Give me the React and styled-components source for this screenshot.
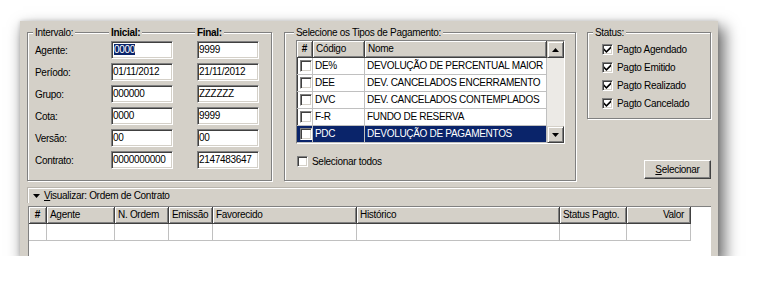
import React from "react";
import styled, { createGlobalStyle } from "styled-components";

// # Style # //
const GlobalStyle = createGlobalStyle`
  body {
    margin: 0;
    background: #fff;
  }
  #root {
    padding: 21px 0 0 20px;
  }
`;

const Window = styled.div`
  width: 698px;
  height: 235px;
  box-sizing: border-box;
  padding: 11px 7px 0 7px;
  background: #d4d0c8;
  box-shadow: 0 0 4px rgba(0, 0, 0, 0.15), 5px 8px 14px 2px rgba(0, 0, 0, 0.55);
  font-family: "Liberation Sans", Arial, sans-serif;
  font-size: 10px;
  letter-spacing: -0.3px;
  color: #000;
  display: flex;
  flex-direction: column;
  overflow: hidden;
`;

const TopArea = styled.div`
  display: flex;
  height: 149px;
`;

const GroupBox = styled.div`
  width: ${p => p.$w}px;
  height: ${p => p.$h}px;
  margin-right: ${p => p.$mr || 0}px;
  box-sizing: border-box;
  padding: 0 ${p => p.$px}px;
  border: 1px solid #808080;
  box-shadow: inset 1px 1px 0 #fff, 1px 1px 0 #fff;
`;

const Legend = styled.div`
  display: ${p => (p.$grid ? "grid" : "flex")};
  grid-template-columns: 76px 86px 62px;
  height: 13px;
  line-height: 13px;
  margin-top: -7px;
`;

const Caption = styled.span`
  justify-self: start;
  background: #d4d0c8;
  padding: 0 2px;
  margin-left: -2px;
  font-weight: ${p => (p.$bold ? 700 : 400)};
`;

const IntervalGrid = styled.div`
  display: grid;
  grid-template-columns: 76px 86px 62px;
  grid-auto-rows: 18px;
  row-gap: 4px;
  margin-top: 2px;
  align-items: center;
`;

const TextBox = styled.div`
  width: 62px;
  height: 18px;
  box-sizing: border-box;
  padding-left: 1px;
  background: #fff;
  border: 1px solid;
  border-color: #808080 #fff #fff #808080;
  box-shadow: inset 1px 1px 0 #404040, inset -1px -1px 0 #d4d0c8;
  line-height: 16px;
  white-space: nowrap;
  overflow: hidden;
`;

const Highlight = styled.span`
  background: #0a246a;
  color: #fff;
  margin-left: 1px;
`;

const PayTable = styled.div`
  width: 269px;
  height: 104px;
  margin-top: 1px;
  box-sizing: border-box;
  border: 1px solid;
  border-color: #808080 #fff #fff #808080;
  background: #fff;
  display: flex;
  overflow: hidden;
`;

const TableBody = styled.div`
  flex: 1;
  box-shadow: inset 1px 1px 0 #404040;
`;

const Row = styled.div`
  display: grid;
  grid-template-columns: ${p => p.$cols};
  height: 17px;
  background: ${p => (p.$selected ? "#0a246a" : "transparent")};
  color: ${p => (p.$selected ? "#fff" : "#000")};
`;

const HeadCell = styled.div`
  box-sizing: border-box;
  background: #d4d0c8;
  border-right: 1px solid #404040;
  border-bottom: 1px solid #404040;
  box-shadow: inset 1px 1px 0 #fff, inset -1px -1px 0 #808080;
  padding: 0 ${p => (p.$right ? 6 : 3)}px 0 3px;
  line-height: 16px;
  text-align: ${p => p.$align || "left"};
  font-weight: ${p => (p.$bold ? 700 : 400)};
  white-space: nowrap;
  overflow: hidden;
`;

const Cell = styled.div`
  box-sizing: border-box;
  border-right: 1px solid #c0c0c0;
  border-bottom: 1px solid #c0c0c0;
  padding-left: 2px;
  line-height: 16px;
  white-space: nowrap;
  overflow: hidden;
  display: flex;
  align-items: center;
  justify-content: ${p => (p.$center ? "center" : "flex-start")};
`;

const ScrollBar = styled.div`
  width: 17px;
  display: flex;
  flex-direction: column;
  background: #eceae6;
`;

const ScrollTrack = styled.div`
  flex: 1;
`;

const ScrollButton = styled.div`
  height: 17px;
  box-sizing: border-box;
  background: #d4d0c8;
  border: 1px solid;
  border-color: #d4d0c8 #404040 #404040 #d4d0c8;
  box-shadow: inset 1px 1px 0 #fff, inset -1px -1px 0 #808080;
  display: flex;
  align-items: center;
  justify-content: center;
`;

const Check = styled.span`
  display: inline-flex;
  align-items: center;
  justify-content: center;
  flex: none;
  width: ${p => p.$size}px;
  height: ${p => p.$size}px;
  box-sizing: border-box;
  background: #fff;
  border: 1px solid;
  border-color: #808080 #fff #fff #808080;
  box-shadow: inset 1px 1px 0 #404040, inset -1px -1px 0 #d4d0c8;
`;

const CheckRow = styled.div`
  display: flex;
  align-items: center;
  gap: 4px;
  height: ${p => p.$h}px;
  margin-top: ${p => p.$mt || 0}px;
  padding-left: ${p => p.$pl || 0}px;
`;

const StatusColumn = styled.div`
  width: 124px;
  display: flex;
  flex-direction: column;
  align-items: flex-end;
`;

const StatusList = styled.div`
  padding-left: 7px;
  margin-top: 1px;
`;

const Button = styled.div`
  margin-top: auto;
  margin-bottom: 2px;
  width: 67px;
  height: 19px;
  box-sizing: border-box;
  background: #d4d0c8;
  border: 1px solid;
  border-color: #fff #404040 #404040 #fff;
  box-shadow: inset -1px -1px 0 #808080;
  display: flex;
  align-items: center;
  justify-content: center;
`;

const ViewBar = styled.div`
  margin-top: 6px;
  height: 16px;
  box-sizing: border-box;
  border-top: 1px solid #b8b4ac;
  border-left: 1px solid #b8b4ac;
  box-shadow: inset 1px 1px 0 #fff;
  display: flex;
  align-items: center;
  gap: 4px;
  padding-left: 5px;
`;

const OrderGrid = styled.div`
  flex: 1;
  margin: 3px 0 0 1px;
  background: #fff;
  border-top: 1px solid #808080;
  border-left: 1px solid #808080;
`;
// # End Style # //

const CheckMark = () => (
  <svg width="7" height="7" viewBox="0 0 7 7">
    <path d="M0 2.3 L2.4 4.7 L7 0.1 L7 2.4 L2.4 7 L0 4.6 Z" fill="#000" />
  </svg>
);

const Arrow = ({ up }) => (
  <svg width="7" height="4" viewBox="0 0 7 4">
    <path d={up ? "M3.5 0 L7 4 L0 4 Z" : "M0 0 L7 0 L3.5 4 Z"} fill="#000" />
  </svg>
);

const intervals = [
  ["Agente:", "0000", "9999"],
  ["Período:", "01/11/2012", "21/11/2012"],
  ["Grupo:", "000000", "ZZZZZZ"],
  ["Cota:", "0000", "9999"],
  ["Versão:", "00", "00"],
  ["Contrato:", "0000000000", "2147483647"],
];

const tipos = [
  ["DE%", "DEVOLUÇÃO DE PERCENTUAL MAIOR"],
  ["DEE", "DEV. CANCELADOS ENCERRAMENTO"],
  ["DVC", "DEV. CANCELADOS CONTEMPLADOS"],
  ["F-R", "FUNDO DE RESERVA"],
  ["PDC", "DEVOLUÇÃO DE PAGAMENTOS"],
];

const status = ["Pagto Agendado", "Pagto Emitido", "Pagto Realizado", "Pagto Cancelado"];

const payCols = "16px 52px 1fr";
const orderCols = "18px 68px 54px 44px 144px 203px 67px 64px";

const orderHeads = [
  ["#", "center", true],
  ["Agente"],
  ["N. Ordem"],
  ["Emissão"],
  ["Favorecido"],
  ["Histórico"],
  ["Status Pagto."],
  ["Valor", "right"],
];

const App = () => {
  return (
    <>
      <GlobalStyle />
      <Window>
        <TopArea>
          <GroupBox $w={245} $h={149} $px={7} $mr={12}>
            <Legend $grid>
              <Caption>Intervalo:</Caption>
              <Caption $bold>Inicial:</Caption>
              <Caption $bold>Final:</Caption>
            </Legend>
            <IntervalGrid>
              {intervals.map(([label, from, to], i) => (
                <React.Fragment key={label}>
                  <span>{label}</span>
                  <TextBox>{i === 0 ? <Highlight>{from}</Highlight> : from}</TextBox>
                  <TextBox>{to}</TextBox>
                </React.Fragment>
              ))}
            </IntervalGrid>
          </GroupBox>

          <GroupBox $w={292} $h={149} $px={11} $mr={11}>
            <Legend>
              <Caption>Selecione os Tipos de Pagamento:</Caption>
            </Legend>
            <PayTable>
              <TableBody>
                <Row $cols={payCols}>
                  <HeadCell $bold $align="center">#</HeadCell>
                  <HeadCell>Código</HeadCell>
                  <HeadCell>Nome</HeadCell>
                </Row>
                {tipos.map(([code, name], i) => (
                  <Row key={code} $cols={payCols} $selected={i === 4}>
                    <Cell $center>
                      <Check $size={12} />
                    </Cell>
                    <Cell>{code}</Cell>
                    <Cell>{name}</Cell>
                  </Row>
                ))}
              </TableBody>
              <ScrollBar>
                <ScrollButton>
                  <Arrow up />
                </ScrollButton>
                <ScrollTrack />
                <ScrollButton>
                  <Arrow />
                </ScrollButton>
              </ScrollBar>
            </PayTable>
            <CheckRow $h={13} $mt={11} $pl={1}>
              <Check $size={11} />
              <span>Selecionar todos</span>
            </CheckRow>
          </GroupBox>

          <StatusColumn>
            <GroupBox $w={124} $h={87} $px={7}>
              <Legend>
                <Caption>Status:</Caption>
              </Legend>
              <StatusList>
                {status.map(s => (
                  <CheckRow key={s} $h={18}>
                    <Check $size={11}>
                      <CheckMark />
                    </Check>
                    <span>{s}</span>
                  </CheckRow>
                ))}
              </StatusList>
            </GroupBox>
            <Button>
              <span>
                <u>S</u>elecionar
              </span>
            </Button>
          </StatusColumn>
        </TopArea>

        <ViewBar>
          <Arrow />
          <span>
            <u>V</u>isualizar: Ordem de Contrato
          </span>
        </ViewBar>

        <OrderGrid>
          <Row $cols={orderCols}>
            {orderHeads.map(([h, align, bold]) => (
              <HeadCell key={h} $align={align} $bold={bold} $right={align === "right"}>
                {h}
              </HeadCell>
            ))}
          </Row>
          <Row $cols={orderCols}>
            {orderHeads.map(([h]) => (
              <Cell key={h} />
            ))}
          </Row>
        </OrderGrid>
      </Window>
    </>
  );
};

export default App;
